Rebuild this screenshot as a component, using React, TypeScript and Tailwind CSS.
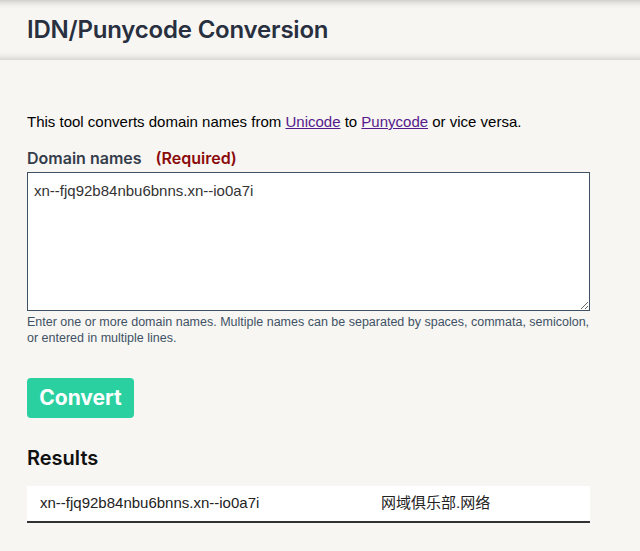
import { useState } from "react";

const heading = { fontFamily: "Inter, 'Open Sans', sans-serif" };
const body = { fontFamily: "'Liberation Sans', Arial, sans-serif" };
const cjk = { fontFamily: "'Liberation Sans', 'Noto Sans CJK SC', sans-serif" };

export default function App() {
  const [value, setValue] = useState("xn--fjq92b84nbu6bnns.xn--io0a7i");

  return (
    <div className="min-h-[551px] bg-[#f7f6f3]" style={body}>
      <header className="flex h-[60px] items-center px-[27px] shadow-[inset_0_9px_9px_-9px_rgba(0,0,0,0.3),inset_0_-9px_9px_-9px_rgba(0,0,0,0.25)]">
        <h1 className="text-[24px] font-semibold tracking-[-0.2px] text-[#283040]" style={heading}>
          IDN/Punycode Conversion
        </h1>
      </header>

      <main className="px-[27px] pt-[52px]">
        <p className="text-[15px] leading-[20px] text-black">
          This tool converts domain names from{" "}
          <a href="#" className="text-[#551a8b] underline">Unicode</a> to{" "}
          <a href="#" className="text-[#551a8b] underline">Punycode</a> or vice versa.
        </p>

        <label className="mt-[14px] flex h-[24px] items-center gap-[14px] text-[16px] font-semibold" style={heading}>
          <span className="text-[#353d4b]">Domain names</span>
          <span className="text-[#8b0a0a]">(Required)</span>
        </label>

        <textarea
          value={value}
          onChange={(e) => setValue(e.target.value)}
          className="mt-[2px] block h-[139px] w-[563px] border border-[#3f5265] bg-white px-[6px] pt-[9px] text-[15px] leading-[18px] text-[#333] outline-none"
          style={body}
        />
        <p className="mt-[3px] w-[566px] text-[12.5px] leading-[16px] text-[#3f5265]">
          Enter one or more domain names. Multiple names can be separated by spaces, commata, semicolon,
          or entered in multiple lines.
        </p>

        <button
          className="mt-[32px] h-[40px] w-[107px] rounded-[4px] bg-[#2ad0a0] text-[21px] font-bold text-white"
          style={heading}
        >
          Convert
        </button>

        <h2 className="mt-[26px] text-[20px] leading-[28px] font-semibold text-[#111]" style={heading}>
          Results
        </h2>

        <div className="mt-[14px] grid h-[37px] w-[563px] grid-cols-[341px_1fr] items-center border-b-2 border-[#333] bg-white text-[15px] text-[#222]">
          <span className="pl-[13px]">xn--fjq92b84nbu6bnns.xn--io0a7i</span>
          <span className="pl-[13px]" style={cjk}>网域俱乐部.网络</span>
        </div>
      </main>
    </div>
  );
}
